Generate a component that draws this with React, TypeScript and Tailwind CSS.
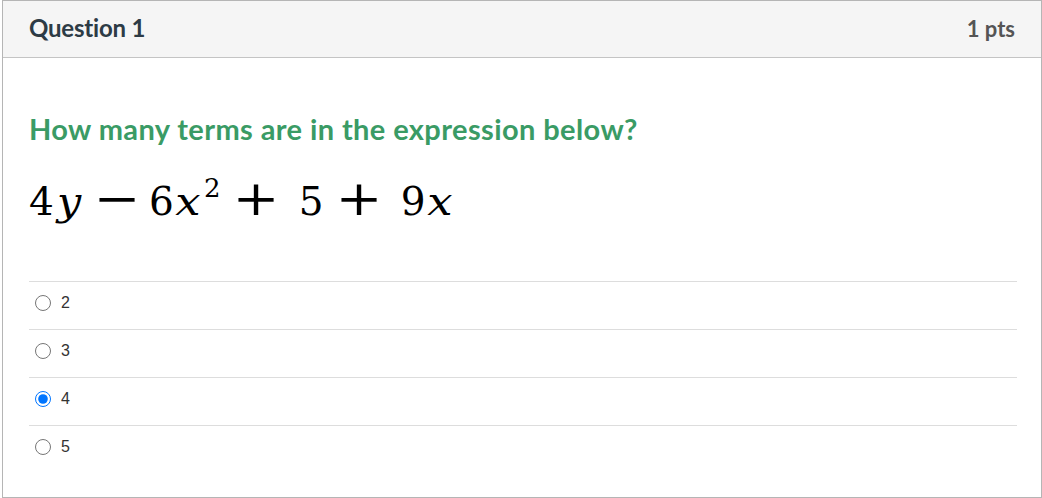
import React from 'react';

const options = ['2', '3', '4', '5'];

export default function App() {
  return (
    <div className="w-[1042px] h-[498px] bg-white pl-[2px]">
      {/* question card */}
      <div className="w-[1040px] h-[498px] border border-[#b5b5b5] flex flex-col">
        <div className="h-[57px] shrink-0 bg-[#f5f5f5] border-b border-[#c4c4c4] flex items-center justify-between pl-[26px] pr-[26px] font-['Lato',sans-serif] font-bold">
          <span className="text-[24px] tracking-[-0.2px] text-[#2d3b45] pb-[2px]">Question 1</span>
          <span className="text-[22px] text-[#555555] pb-[2px]">1 pts</span>
        </div>

        <div className="px-[26px] pt-[54px]">
          <p className="font-['Lato',sans-serif] font-bold text-[29px] leading-[34px] tracking-[0.4px] text-[#3a9b65]">
            How many terms are in the expression below?
          </p>

          {/* 4y - 6x^2 + 5 + 9x */}
          <div className="mt-[28px] flex items-baseline font-['DejaVu_Serif',serif] text-[39px] leading-none text-black">
            <span>4</span>
            <span className="italic ml-[4px] inline-block scale-x-[1.1]">y</span>
            <span className="ml-[17px] text-[48px] inline-block scale-x-[1.17]">−</span>
            <span className="ml-[12px]">6</span>
            <span className="italic ml-[3px] inline-block scale-x-[1.15]">x</span>
            <span className="text-[26px] relative top-[-18px] ml-[5px]">2</span>
            <span className="ml-[16px] text-[48px] inline-block scale-x-[1.17]">+</span>
            <span className="ml-[22px]">5</span>
            <span className="ml-[15px] text-[48px] inline-block scale-x-[1.17]">+</span>
            <span className="ml-[22px]">9</span>
            <span className="italic ml-[3px] inline-block scale-x-[1.15]">x</span>
          </div>

          <div className="mt-[59px] w-[988px]">
            {options.map((o) => (
              <label key={o} className="h-[48px] border-t border-[#dddddd] flex items-center pb-[5px]">
                <input
                  type="radio"
                  name="q1"
                  defaultChecked={o === '4'}
                  className="ml-[6px] w-[16px] h-[16px] m-0"
                />
                <span className="ml-[10px] font-['Liberation_Sans',sans-serif] text-[16px] text-[#333333]">{o}</span>
              </label>
            ))}
          </div>
        </div>
      </div>
    </div>
  );
}
